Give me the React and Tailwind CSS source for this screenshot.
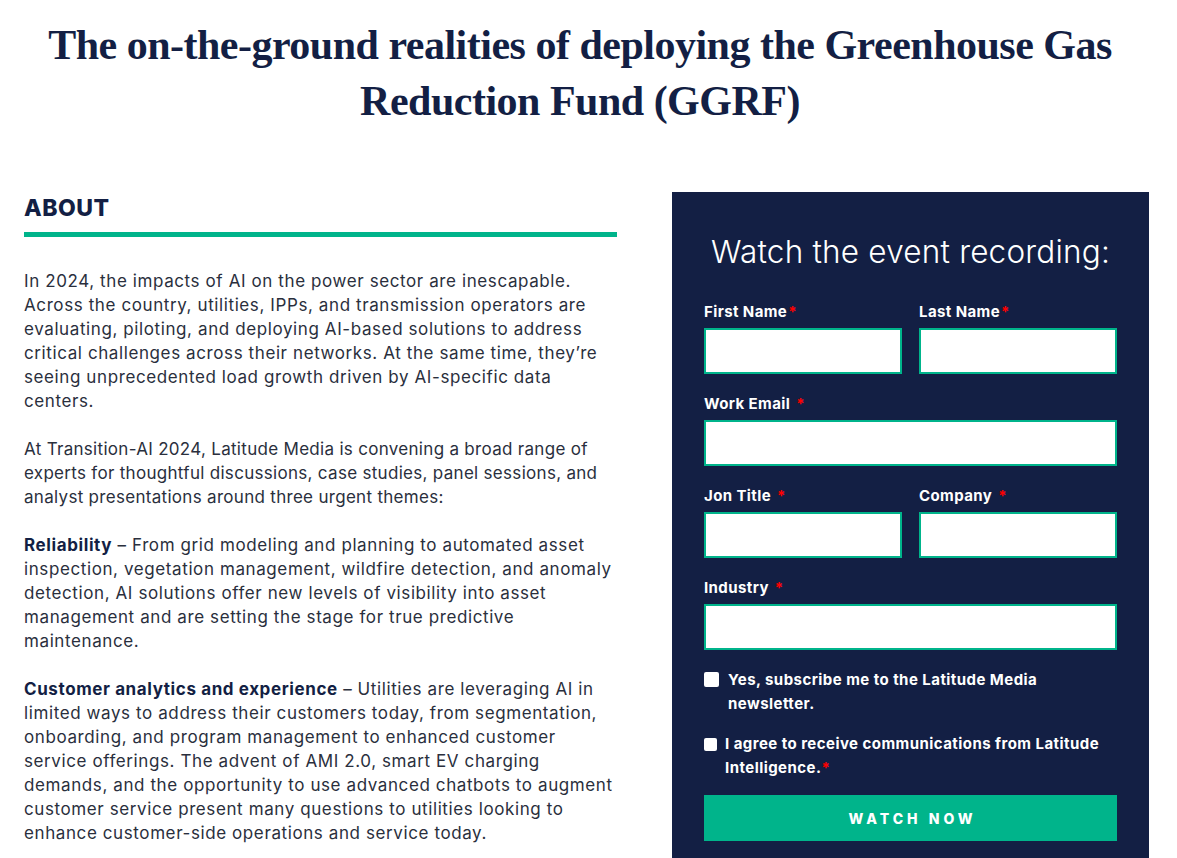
const sans = "font-['Inter','Liberation_Sans',sans-serif]";

function Field({ label, gap = false, className = '' }) {
  return (
    <div className={`flex flex-col ${className}`}>
      <label className="text-[15px] font-bold leading-5 text-white mb-[6px] tracking-[0.4px]">
        {label}
        <span className={`text-[#ff0000] ${gap ? 'ml-[6px]' : 'ml-[1px]'}`}>*</span>
      </label>
      <input type="text" className="h-[46px] w-full bg-white border-2 border-[#00b48b] outline-none" />
    </div>
  );
}

export default function App() {
  return (
    <div className={`w-[1177px] h-[858px] overflow-hidden bg-white ${sans}`}>
      <h1 className="w-[1160px] pt-[17px] text-center font-['Liberation_Serif',serif] font-bold text-[42px] leading-[56px] text-[#131f44] tracking-[-0.5px]">
        The on-the-ground realities of deploying the Greenhouse Gas
        <br />
        Reduction Fund (GGRF)
      </h1>

      <div className="flex items-start mt-[63px] pl-6">
        <div className="w-[593px] pt-[2px]">
          <h2 className="text-[23px] font-extrabold leading-7 text-[#131f44] tracking-[0.5px]">ABOUT</h2>
          <div className="h-[5px] bg-[#00b48b] mt-[10px]" />
          <div className="mt-[32px] text-[17px] leading-6 text-[#2a2f3d] tracking-[0.6px] space-y-6">
            <p>
              In 2024, the impacts of AI on the power sector are inescapable. Across the country, utilities, IPPs, and
              transmission operators are evaluating, piloting, and deploying AI-based solutions to address critical
              challenges across their networks. At the same time, they’re seeing unprecedented load growth driven by
              AI-specific data centers.
            </p>
            <p className="tracking-[0.3px]">
              At Transition-AI 2024, Latitude Media is convening a broad range of experts for thoughtful discussions,
              case studies, panel sessions, and analyst presentations around three urgent themes:
            </p>
            <p>
              <b className="text-[#131f44]">Reliability</b> – From grid modeling and planning to automated asset
              inspection, vegetation management, wildfire detection, and anomaly detection, AI solutions offer new
              levels of visibility into asset management and are setting the stage for true predictive maintenance.
            </p>
            <p>
              <b className="text-[#131f44]">Customer analytics and experience</b> – Utilities are leveraging AI in
              limited ways to address their customers today, from segmentation, onboarding, and program management to
              enhanced customer service offerings. The advent of AMI 2.0, smart EV charging demands, and the
              opportunity to use advanced chatbots to augment customer service present many questions to utilities
              looking to enhance customer-side operations and service today.
            </p>
          </div>
        </div>

        <div className="ml-[55px] w-[477px] h-[700px] bg-[#131f44] px-8 pt-[40px]">
          <h3 className="text-center text-white text-[31.5px] font-light leading-10 tracking-[0.2px]">
            Watch the event recording:
          </h3>
          <div className="mt-[30px] grid grid-cols-2 gap-x-[17px] gap-y-[20px]">
            <Field label="First Name" />
            <Field label="Last Name" />
            <Field label="Work Email" gap className="col-span-2" />
            <Field label="Jon Title" gap />
            <Field label="Company" gap />
            <Field label="Industry" gap className="col-span-2" />
          </div>

          <div className="mt-[18px] flex items-start gap-[9px] text-[15px] font-bold leading-6 text-white tracking-[0.45px]">
            <span className="mt-[4px] w-[15px] h-[15px] shrink-0 rounded-[2px] bg-white" />
            <span>
              Yes, subscribe me to the Latitude Media
              <br />
              newsletter.
            </span>
          </div>
          <div className="mt-[16px] flex items-start gap-[8px] text-[15px] font-bold leading-6 text-white tracking-[0.45px]">
            <span className="mt-[6px] w-[13px] h-[13px] shrink-0 rounded-[2px] bg-white" />
            <span>
              I agree to receive communications from Latitude
              <br />
              Intelligence.<span className="text-[#ff0000]">*</span>
            </span>
          </div>

          <button className="mt-[15px] w-full h-[46px] bg-[#00b48b] text-white text-[14px] font-extrabold tracking-[4px] pl-[4px]">
            WATCH NOW
          </button>
        </div>
      </div>
    </div>
  );
}
